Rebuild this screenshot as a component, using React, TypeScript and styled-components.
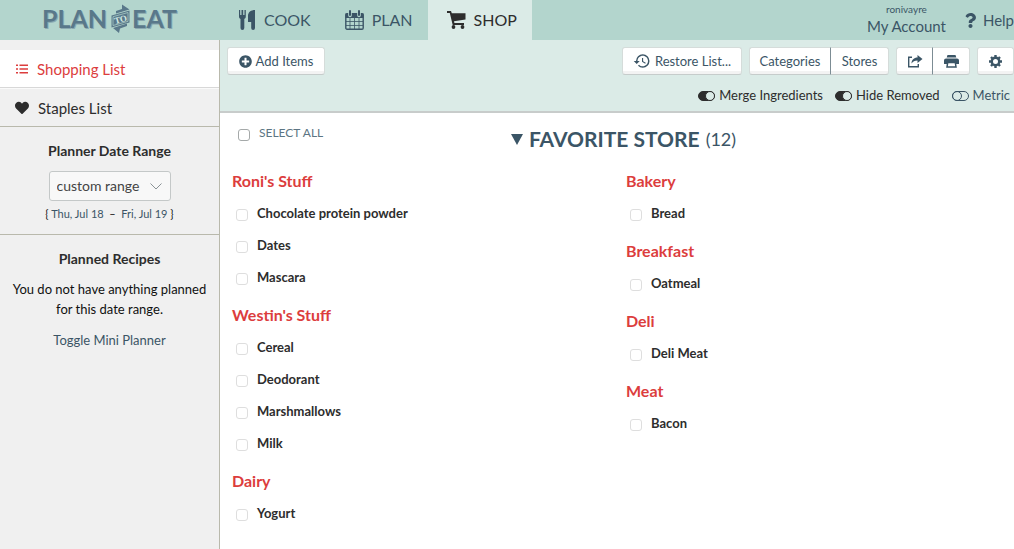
import React from 'react';
import styled, { createGlobalStyle } from 'styled-components';
import { FaHeart, FaPlusCircle, FaQuestion } from 'react-icons/fa';
import { MdHistory } from 'react-icons/md';

const ink = '#3b5566';
const red = '#dc3d3d';
const dark = '#2d2d2d';
const mint = '#b3d5cd';
const paleMint = '#dbebe7';

const GlobalStyle = createGlobalStyle`
  *, *::before, *::after { box-sizing: border-box; }
  body {
    margin: 0;
    background: #fff;
    color: ${dark};
    font: 13px/20px Lato, "Open Sans", sans-serif;
  }
  button, input, select { font: inherit; color: inherit; margin: 0; }
  h1, h2, h3, p, ul { margin: 0; padding: 0; }
  ul { list-style: none; }
  a { color: ${ink}; text-decoration: none; }
  svg { display: block; flex: none; }
`;

const Header = styled.header`
  display: flex;
  height: 40px;
  background: ${mint};
  white-space: nowrap;
`;

const Logo = styled.a`
  width: 220px;
  flex: none;
  padding-left: 42px;
`;

const Nav = styled.nav`
  display: flex;
  flex: 1;
`;

const Tab = styled.a<{ $active?: boolean }>`
  display: flex;
  align-items: center;
  gap: 8px;
  padding: 0 15px 0 19px;
  font-size: 16px;
  color: ${(p) => (p.$active ? dark : ink)};
  background: ${(p) => (p.$active ? paleMint : 'transparent')};
`;

const Account = styled.a`
  display: flex;
  flex-direction: column;
  align-items: center;
  padding-top: 3px;
  font-size: 15px;
  line-height: 20px;
`;

const UserName = styled.small`
  font-size: 10px;
  line-height: 13px;
`;

const Help = styled.a`
  display: flex;
  align-items: center;
  gap: 5px;
  margin-left: 17px;
  font-size: 15px;
`;

const Layout = styled.div`
  display: grid;
  grid-template-columns: 220px minmax(0, 1fr);
  min-height: calc(100vh - 40px);
`;

const Sidebar = styled.aside`
  padding-top: 10px;
  background: #f0f0f0;
  border-right: 1px solid #b9b9ac;
`;

const SideLink = styled.a<{ $active?: boolean }>`
  box-sizing: content-box;
  display: flex;
  align-items: center;
  gap: 9px;
  height: 37px;
  padding-left: 15px;
  font-size: 15px;
  color: ${(p) => (p.$active ? red : dark)};
  background: ${(p) => (p.$active ? '#fff' : 'transparent')};
  border-bottom: 1px solid ${(p) => (p.$active ? '#d8d8d8' : '#b9b9ac')};
  & + & { border-top: 1px solid #fafafa; }
`;

const SidePanel = styled.section`
  padding: 14px 8px 12px;
  text-align: center;
  & + & { border-top: 1px solid #b9b9ac; }
`;

const SideTitle = styled.h2`
  font-size: 14px;
  line-height: 20px;
`;

const SelectWrap = styled.div`
  position: relative;
  width: 122px;
  margin: 10px auto 5px;
  svg { position: absolute; right: 9px; top: 12px; pointer-events: none; }
`;

const RangeSelect = styled.select`
  appearance: none;
  width: 100%;
  height: 30px;
  padding: 0 7px;
  font-size: 14px;
  color: #444;
  background: #f8f8f8;
  border: 1px solid #c4c8c8;
  border-radius: 3px;
`;

const Dates = styled.p`
  font-size: 11px;
  line-height: 16px;
  color: #111;
`;

const Message = styled.p`
  margin: 10px 0 11px;
  color: #111;
`;

const Toolbar = styled.div`
  height: 73px;
  padding: 7px 0 0 7px;
  background: ${paleMint};
  border-bottom: 2px solid #c8cccb;
  white-space: nowrap;
`;

const ToolRow = styled.div`
  display: flex;
  align-items: center;
  gap: 7px;
`;

const Spacer = styled.div`
  flex: 1;
`;

const Group = styled.div`
  display: flex;
`;

const ToolButton = styled.button<{ $width?: number }>`
  display: flex;
  align-items: center;
  justify-content: center;
  gap: 4px;
  width: ${(p) => (p.$width ? `${p.$width}px` : 'auto')};
  height: 28px;
  padding: 0;
  color: ${ink};
  background: linear-gradient(#fff 88%, #f3f3f3 88%);
  border: 1px solid #d5dcda;
  border-bottom-color: #c6cccb;
  border-radius: 3px;
  ${Group} &:not(:last-child) { border-right: 1px solid #7c8c94; border-radius: 3px 0 0 3px; }
  ${Group} &:not(:first-child) { border-left: 0; border-radius: 0 3px 3px 0; }
`;

const Options = styled.div`
  display: flex;
  justify-content: flex-end;
  gap: 12px;
  padding: 10px 4px 0 0;
`;

const Toggle = styled.label<{ $on?: boolean }>`
  display: flex;
  align-items: center;
  gap: 4px;
  color: ${(p) => (p.$on ? dark : ink)};
`;

const Switch = styled.input`
  appearance: none;
  display: flex;
  justify-content: flex-start;
  width: 17px;
  height: 10px;
  margin: 2px 0 0 0 !important;
  border: 1px solid ${ink};
  border-radius: 5px;
  background: transparent;
  &::before {
    content: '';
    width: 10px;
    height: 10px;
    margin: -1px;
    border: 1px solid ${ink};
    border-radius: 50%;
  }
  &:checked { justify-content: flex-end; background: ${dark}; border-color: ${dark}; }
  &:checked::before { background: ${paleMint}; border-color: ${dark}; }
`;

const StoreHeader = styled.div`
  display: grid;
  grid-template-columns: 1fr auto 1fr;
  align-items: center;
  height: 52px;
  padding-left: 13px;
`;

const SelectAll = styled.label`
  display: flex;
  align-items: center;
  gap: 9px;
  padding: 0 0 12px 5px;
  font-size: 12px;
  color: #5c7583;
`;

const Check = styled.input<{ $strong?: boolean }>`
  appearance: none;
  width: 12px;
  height: 12px;
  margin-top: 4px !important;
  background: #fff;
  border: 1px solid ${(p) => (p.$strong ? '#a5a9a9' : '#dedede')};
  border-radius: 3px;
`;

const StoreTitle = styled.h1`
  display: flex;
  align-items: center;
  gap: 6px;
  font-size: 21px;
  color: ${ink};
`;

const Count = styled.span`
  font-size: 18px;
  font-weight: 400;
`;

const Columns = styled.div`
  display: grid;
  grid-template-columns: 1fr 1fr;
  gap: 18px;
  padding: 0 12px;
`;

const Category = styled.section`
  margin-bottom: 6px;
`;

const CategoryTitle = styled.h2`
  font-size: 16px;
  line-height: 32px;
  color: ${red};
`;

const Item = styled.label`
  display: flex;
  align-items: center;
  gap: 9px;
  height: 32px;
  padding-left: 4px;
  font-weight: 700;
`;

const BigWord = styled.text`
  font: 700 25px Lato, sans-serif;
`;

const LogoArt = () => (
  <svg width="138" height="38" viewBox="0 0 138 38" role="img" aria-label="Plan to Eat">
    <BigWord x="1" y="29" fill="#8aa9b0">PLAN</BigWord>
    <BigWord x="0" y="28" fill="#59788a">PLAN</BigWord>
    <BigWord x="91" y="29" fill="#8aa9b0">EAT</BigWord>
    <BigWord x="90" y="28" fill="#59788a">EAT</BigWord>
    <path d="M80 4.500 87.500 9.500 74 13.500V11l6-2ZM77 33l-6-5 14-4.500V26l-7 2.500Z" fill="#59788a" />
    <path d="M69.500 15.500 87.500 10.500V22.500L69.500 27.500Z" fill="#59788a" />
    <path d="M71 16.700 86 12.500V21.300L71 25.500Z" fill="none" stroke={mint} strokeWidth=".7" />
    <text x="72" y="22.500" transform="rotate(-15 78.500 19)" fill="#d3e9e3" fontFamily="Liberation Serif" fontWeight="700" fontSize="9">TO</text>
  </svg>
);

const CutleryIcon = () => (
  <svg width="17" height="20" viewBox="0 0 17 20" fill={ink}>
    <path d="M0 0h1.200v5h1.300V0h1.700v5h1.300V0h1.300v6.500c0 1.500-.8 2-1.500 2.500V18a1.900 1.900 0 0 1-3.800 0V9C.8 8.500 0 8 0 6.500ZM9 6c0-4 3-6 7-6v18a1.900 1.900 0 0 1-3.800 0V12H9Z" />
  </svg>
);

const CalendarIcon = () => (
  <svg width="19" height="20" viewBox="0 0 19 20" fill="none" stroke={ink}>
    <rect x=".8" y="3.800" width="17.400" height="15.400" rx="1.200" strokeWidth="1.400" />
    <path d="M5 8v11M9.500 8v11M14 8v11M1 11.500h17M1 15.500h17" strokeWidth=".8" />
    <path d="M.5 3.500h18V8H.5Z" fill={ink} stroke="none" />
    <path d="M5 .5v5M14 .5v5" stroke={mint} strokeWidth="3.600" strokeLinecap="round" />
    <path d="M5 1v4M14 1v4" strokeWidth="2" strokeLinecap="round" />
  </svg>
);

const CartIcon = () => (
  <svg width="19" height="18" viewBox="0 0 19 18" fill={dark}>
    <path d="M0 0h4l.8 2.200H18.500v6.300L7 10.300l.4 1.700H17v1.900H5.700L2.800 1.900H0Z" />
    <circle cx="6.500" cy="16" r="1.900" /><circle cx="15.500" cy="16" r="1.900" />
  </svg>
);

const ListIcon = () => (
  <svg width="13" height="10" viewBox="0 0 13 10" stroke={red} strokeWidth="1.600">
    <path d="M1 1.200h2M4.500 1.200H13M1 5h2M4.500 5H13M1 8.800h2M4.500 8.800H13" />
  </svg>
);

const ShareIcon = () => (
  <svg width="16" height="13" viewBox="0 0 16 13">
    <path d="M5 2.200H1.700v9.600h9.600V9" fill="none" stroke={ink} strokeWidth="1.400" />
    <path d="M10.500 0 15.500 4l-5 4V5.500C7.500 5.500 6 6.500 4.500 8.500c0-3.500 2.500-6 6-6Z" fill={ink} />
  </svg>
);

const PrintIcon = () => (
  <svg width="15" height="13" viewBox="0 0 15 13">
    <path d="M3.500 0h8l.8 2.500H2.700ZM2 3.500h11a2 2 0 0 1 2 2V9h-3V7H3v2H0V5.500a2 2 0 0 1 2-2Z" fill={ink} />
    <path d="M3.700 7.500h7.600l.7 4.500h-9Z" fill="#fff" stroke={ink} strokeWidth="1.500" />
  </svg>
);

const GearIcon = () => (
  <svg width="13" height="13" viewBox="0 0 13 13" fill="none" stroke={ink}>
    <circle cx="6.500" cy="6.500" r="3.700" strokeWidth="2.400" />
    <path d="M6.500 0v2M6.500 11v2M0 6.500h2M11 6.500h2M2 2l1.300 1.300M9.700 9.700 11 11M2 11l1.300-1.300M9.700 3.300 11 2" strokeWidth="2.400" />
  </svg>
);

type CategoryData = { name: string; items: string[] };

const columns: CategoryData[][] = [
  [
    { name: "Roni's Stuff", items: ['Chocolate protein powder', 'Dates', 'Mascara'] },
    { name: "Westin's Stuff", items: ['Cereal', 'Deodorant', 'Marshmallows', 'Milk'] },
    { name: 'Dairy', items: ['Yogurt'] },
  ],
  [
    { name: 'Bakery', items: ['Bread'] },
    { name: 'Breakfast', items: ['Oatmeal'] },
    { name: 'Deli', items: ['Deli Meat'] },
    { name: 'Meat', items: ['Bacon'] },
  ],
];

export default function App() {
  return (
    <>
      <GlobalStyle />
      <Header>
        <Logo href="#"><LogoArt /></Logo>
        <Nav>
          <Tab href="#cook"><CutleryIcon />COOK</Tab>
          <Tab href="#plan"><CalendarIcon />PLAN</Tab>
          <Tab href="#shop" $active><CartIcon />SHOP</Tab>
        </Nav>
        <Account href="#account"><UserName>ronivayre</UserName>My Account</Account>
        <Help href="#help"><FaQuestion size={15} />Help</Help>
      </Header>
      <Layout>
        <Sidebar>
          <SideLink href="#list" $active><ListIcon />Shopping List</SideLink>
          <SideLink href="#staples"><FaHeart size={14} />Staples List</SideLink>
          <SidePanel>
            <SideTitle>Planner Date Range</SideTitle>
            <SelectWrap>
              <RangeSelect aria-label="Planner date range" defaultValue="custom">
                <option value="custom">custom range</option>
              </RangeSelect>
              <svg width="12" height="7" viewBox="0 0 12 7" fill="none" stroke="#8a9296"><path d="m.5.500 5.500 5.500L11.500.500" /></svg>
            </SelectWrap>
            <Dates>{'{ '}<a href="#from">Thu, Jul 18</a>&nbsp; – &nbsp;<a href="#to">Fri, Jul 19</a>{' }'}</Dates>
          </SidePanel>
          <SidePanel>
            <SideTitle>Planned Recipes</SideTitle>
            <Message>You do not have anything planned for this date range.</Message>
            <a href="#mini">Toggle Mini Planner</a>
          </SidePanel>
        </Sidebar>
        <main>
          <Toolbar>
            <ToolRow>
              <ToolButton $width={98}><FaPlusCircle size={13} />Add Items</ToolButton>
              <Spacer />
              <ToolButton $width={120}><MdHistory size={18} />Restore List...</ToolButton>
              <Group>
                <ToolButton $width={82}>Categories</ToolButton>
                <ToolButton $width={58}>Stores</ToolButton>
              </Group>
              <Group>
                <ToolButton $width={37} aria-label="Share"><ShareIcon /></ToolButton>
                <ToolButton $width={37} aria-label="Print"><PrintIcon /></ToolButton>
              </Group>
              <ToolButton $width={37} aria-label="Settings"><GearIcon /></ToolButton>
            </ToolRow>
            <Options>
              <Toggle $on><Switch type="checkbox" defaultChecked />Merge Ingredients</Toggle>
              <Toggle $on><Switch type="checkbox" defaultChecked />Hide Removed</Toggle>
              <Toggle><Switch type="checkbox" />Metric</Toggle>
            </Options>
          </Toolbar>
          <StoreHeader>
            <SelectAll><Check type="checkbox" $strong />SELECT ALL</SelectAll>
            <StoreTitle>
              <svg width="12" height="11" viewBox="0 0 12 11" fill={ink}><path d="M0 0h12L6 11Z" /></svg>
              FAVORITE STORE <Count>(12)</Count>
            </StoreTitle>
          </StoreHeader>
          <Columns>
            {columns.map((column, i) => (
              <div key={i}>
                {column.map((category) => (
                  <Category key={category.name}>
                    <CategoryTitle>{category.name}</CategoryTitle>
                    <ul>
                      {category.items.map((item) => (
                        <li key={item}><Item><Check type="checkbox" />{item}</Item></li>
                      ))}
                    </ul>
                  </Category>
                ))}
              </div>
            ))}
          </Columns>
        </main>
      </Layout>
    </>
  );
}
